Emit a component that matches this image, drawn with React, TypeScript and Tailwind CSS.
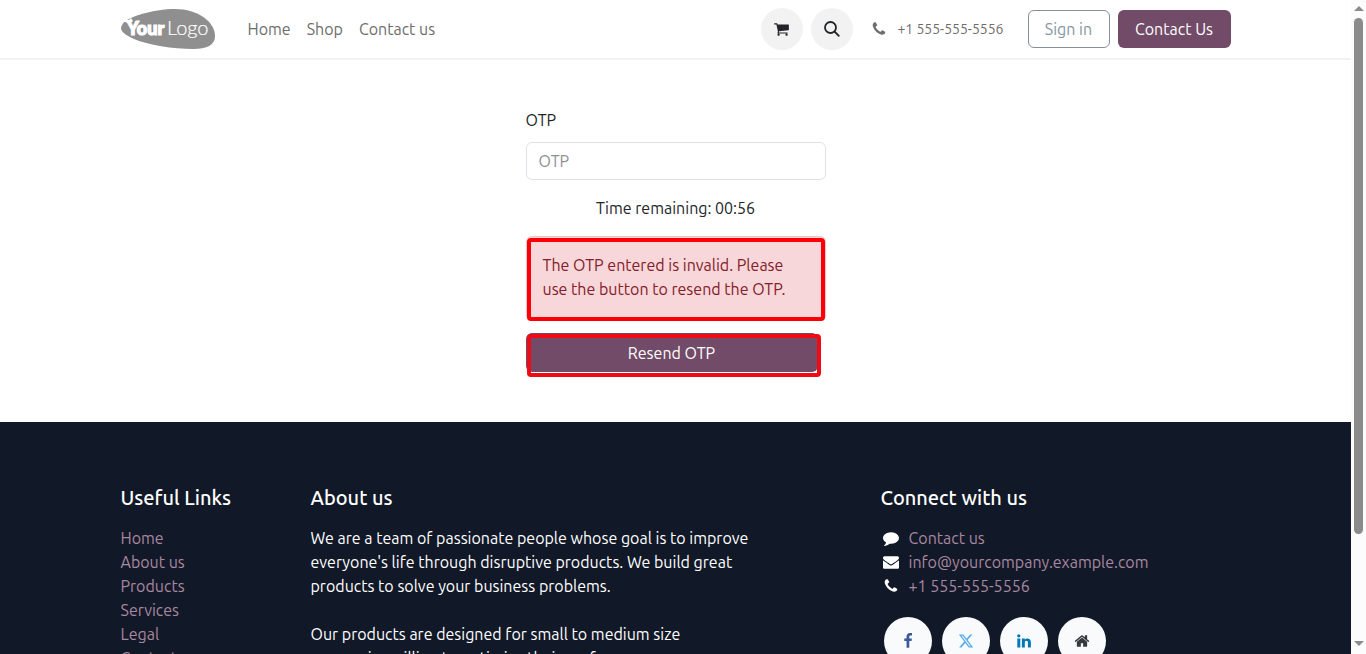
import { FaXTwitter } from "react-icons/fa6";

const paths = {
  cart: "M640 1536q0 52-38 90t-90 38-90-38-38-90 38-90 90-38 90 38 38 90zm896 0q0 52-38 90t-90 38-90-38-38-90 38-90 90-38 90 38 38 90zm128-1088v512q0 24-16.5 42.5t-40.5 21.5l-1044 122q13 60 13 70 0 16-24 64h920q26 0 45 19t19 45-19 45-45 19h-1024q-26 0-45-19t-19-45q0-11 8-31.5t16-36 21.5-40 15.5-29.5l-177-823h-204q-26 0-45-19t-19-45 19-45 45-19h256q16 0 28.5 6.5t19.5 15.5 13 24.5 8 26 5.5 29.5 4.5 26h1201q26 0 45 19t19 45z",
  phone: "M1600 1240q0 27-10 70.5t-21 68.5q-21 50-122 106-94 51-186 51-27 0-53-3.5t-57.5-12.5-47-14.5-55.5-20.5-49-18q-98-35-175-83-127-79-264-216t-216-264q-48-77-83-175-3-9-18-49t-20.5-55.5-14.5-47-12.5-57.5-3.5-53q0-92 51-186 56-101 106-122 25-11 68.5-21t70.5-10q14 0 21 3 18 6 53 76 11 19 30 54t35 63.5 31 53.5q3 4 17.5 25t21.5 35.5 7 28.5q0 20-28.5 50t-62 55-62 53-28.5 46q0 9 5 22.5t8.5 20.5 14 24 11.5 19q76 137 174 235t235 174q2 1 19 11.5t24 14 20.5 8.5 22.5 5q18 0 46-28.5t53-62 55-62 50-28.5q14 0 28.5 7t35.5 21.5 25 17.5q25 15 53.5 31t63.5 35 54 30q70 35 76 53 3 7 3 21z",
  comment: "M1792 896q0 174-120 321.5t-326 233-450 85.5q-70 0-145-8-198 175-460 242-49 14-114 22-17 2-30.5-9t-17.5-29v-1q-3-4-.5-12t2-10 4.5-9.5l6-9 7-8.5 8-9q7-8 31-34.5t34.5-38 31-39.5 32.5-51 27-59 26-76q-157-89-247.5-220t-90.5-281q0-130 71-248.5t191-204.5 286-136.5 348-50.5q244 0 450 85.5t326 233 120 321.5z",
  envelope: "M1792 710v794q0 66-47 113t-113 47h-1472q-66 0-113-47t-47-113v-794q44 49 101 87 362 246 497 345 57 42 92.5 65.5t94.5 48 110 24.5h2q51 0 110-24.5t94.5-48 92.5-65.5q170-123 498-345 57-39 100-87zm0-294q0 79-49 151t-122 123q-376 261-468 325-10 7-42.5 31t-54 38.5-52 32.5-57.5 27-50 9h-2q-23 0-50-9t-57.5-27-52-32.5-54-38.5-42.5-31q-91-64-262-182.5t-205-142.5q-62-42-117-115.5t-55-136.5q0-78 41.5-130t118.5-52h1472q65 0 112.5 47t47.5 113z",
  facebook: "M1343 12v264h-157q-86 0-116 36t-30 108v189h293l-39 296h-254v759h-306v-759h-255v-296h255v-218q0-186 104-288.5t277-102.5q147 0 228 12z",
  linkedin: "M477 625v991h-330v-991h330zm21-306q1 73-50.5 122t-135.5 49h-2q-82 0-132-49t-50-122q0-74 51.5-122.5t134.5-48.5 133 48.5 51 122.5zm1166 729v568h-329v-530q0-105-40.5-164.5t-126.5-59.5q-63 0-105.5 34.5t-63.5 85.5q-11 30-11 81v553h-329q2-399 2-647t-1-296l-1-48h329v144h-2q20-32 41-56t56.5-52 87-43.5 114.5-15.5q171 0 278 113.5t107 332.5z",
  home: "M1472 992v480q0 26-19 45t-45 19h-384v-384h-256v384h-384q-26 0-45-19t-19-45v-480q0-1 .5-3t.5-3l575-474 575 474q1 2 1 6zm223-69l-62 74q-8 9-21 11h-3q-13 0-21-7l-692-577-692 577q-12 8-24 7-13-2-21-11l-62-74q-8-10-7-23.5t11-21.5l719-599q32-26 76-26t76 26l244 204v-195q0-14 9-23t23-9h192q14 0 23 9t9 23v408l219 182q10 8 11 21.5t-7 23.5z",
};

function Icon({ name, className }: { name: keyof typeof paths; className: string }) {
  return (
    <svg viewBox="0 0 1792 1792" fill="currentColor" aria-hidden="true" className={className}>
      <path d={paths[name]} />
    </svg>
  );
}

function Logo() {
  return (
    <svg viewBox="0 0 95 40" className="h-10 w-[95px]" role="img" aria-label="Your Logo">
      <path
        d="M0 19C1 13 7 9.500 16 6.500C31 1.500 44 0 54 0C77 0 94 13 94 27C94 36 86 40 72 40C52 40 27 36 13 30C4 26 0 22.500 0 19Z"
        fill="#8f8f8f"
      />
      <path d="M2 12L5 10L8 11L10 9L12 12L9 15Z" fill="#fff" />
      <text x="6" y="26" fill="#fff" stroke="#fff" strokeWidth="1.2" fontFamily="Lato, sans-serif" fontWeight="900" fontSize="18">
        Your
      </text>
      <text x="46" y="26" fill="#fff" stroke="#fff" strokeWidth="0.2" fontFamily="Lato, sans-serif" fontWeight="300" fontSize="20">
        Logo
      </text>
    </svg>
  );
}

function Header() {
  return (
    <header className="border-b-2 border-[#f3f3f3] bg-white">
      <div className="mx-auto flex h-[58px] max-w-[1110px] items-center">
        <a href="#home" className="mr-6">
          <Logo />
        </a>
        <nav className="flex text-[#6d6d6d]">
          <a href="#home" className="px-2">Home</a>
          <a href="#shop" className="px-2">Shop</a>
          <a href="#contact" className="px-2">Contact us</a>
        </nav>
        <div className="ml-auto flex items-center">
          <a href="#cart" aria-label="Cart" className="mr-2 flex size-[42px] items-center justify-center rounded-full bg-[#f2f2f2] text-[#212529]">
            <Icon name="cart" className="size-4" />
          </a>
          <button type="button" aria-label="Search" className="mr-[18px] flex size-[42px] items-center justify-center rounded-full bg-[#f2f2f2] text-[#212529]">
            <svg viewBox="0 0 16 16" className="size-4" fill="none" stroke="currentColor" strokeWidth="1.8" aria-hidden="true">
              <circle cx="6.500" cy="6.500" r="5.500" />
              <path d="M10.500 10.500L15.300 15.300" />
            </svg>
          </button>
          <a href="tel:+15555555556" className="mr-6 flex items-center gap-2.5 text-sm text-[#6d6d6d]">
            <Icon name="phone" className="size-4" />
            +1 555-555-5556
          </a>
          <a href="#login" className="mr-2 flex h-[38px] w-[82px] items-center justify-center rounded-md border border-[#8a8f94] text-[#8595a2]">
            Sign in
          </a>
          <a href="#contact" className="flex h-[38px] w-[113px] items-center justify-center rounded-md bg-[#714b67] text-white">
            Contact Us
          </a>
        </div>
      </div>
    </header>
  );
}

function OtpForm() {
  return (
    <main className="bg-white pt-12 pb-[45px]">
      <form className="mx-auto flex w-[300px] flex-col text-[#212529]">
        <label htmlFor="otp" className="mb-2.5">OTP</label>
        <input
          id="otp"
          type="text"
          placeholder="OTP"
          className="mb-4 h-[38px] rounded-md border border-[#dee2e6] px-3 outline-none placeholder:text-[#8f8f8f]"
        />
        <p className="mb-4 text-center">Time remaining: 00:56</p>
        <div className="relative mb-3 h-[85px] rounded-md border border-[#f1c5c9] bg-[#f8d7da] p-4 text-[#842029]" role="alert">
          The OTP entered is invalid. Please use the button to resend the OTP.
          <span className="pointer-events-none absolute inset-x-0 top-px -bottom-px rounded-sm border-4 border-[#fb0007]" />
        </div>
        <div className="relative h-11 w-[295px]">
          <button type="button" className="h-[39px] w-[292px] rounded-md bg-[#714b67] text-white">
            Resend OTP
          </button>
          <span className="pointer-events-none absolute top-px right-0 bottom-0 left-px rounded-sm border-4 border-[#f00a14]" />
        </div>
      </form>
    </main>
  );
}

const links = ["Home", "About us", "Products", "Services", "Legal", "Contact us"];

function Footer() {
  return (
    <footer className="grow bg-[#111827] pt-16 text-white">
      <div className="mx-auto grid max-w-[1110px] grid-cols-[190px_445px_1fr_350px]">
        <section>
          <h5 className="mb-4 text-xl leading-6 font-medium">Useful Links</h5>
          <ul className="text-[#a887a0]">
            {links.map((label) => (
              <li key={label}>
                <a href="#link">{label}</a>
              </li>
            ))}
          </ul>
        </section>
        <section>
          <h5 className="mb-4 text-xl leading-6 font-medium">About us</h5>
          <p className="mb-6">
            We are a team of passionate people whose goal is to improve
            everyone's life through disruptive products. We build great
            products to solve your business problems.
          </p>
          <p>
            Our products are designed for small to medium size
            <br />
            companies willing to optimize their performance.
          </p>
        </section>
        <section className="col-start-4">
          <h5 className="mb-4 text-xl leading-6 font-medium">Connect with us</h5>
          <ul className="text-[#a887a0]">
            <li className="flex items-center gap-2.5">
              <Icon name="comment" className="ml-0.5 size-4 text-white" />
              <a href="#contact">Contact us</a>
            </li>
            <li className="flex items-center gap-2.5">
              <Icon name="envelope" className="ml-0.5 size-4 text-white" />
              <a href="mailto:info@yourcompany.example.com">info@yourcompany.example.com</a>
            </li>
            <li className="flex items-center gap-2.5">
              <Icon name="phone" className="ml-0.5 size-4 text-white" />
              <a href="tel:+15555555556">+1 555-555-5556</a>
            </li>
          </ul>
          <div className="mt-[19px] ml-[3px] flex gap-2.5">
            <a href="#facebook" aria-label="Facebook" className="flex size-12 items-center justify-center rounded-full bg-[#f9fafb] text-[#3b5998]">
              <Icon name="facebook" className="size-4" />
            </a>
            <a href="#x" aria-label="X" className="flex size-12 items-center justify-center rounded-full bg-[#f9fafb] text-[#55acee]">
              <FaXTwitter className="size-4" />
            </a>
            <a href="#linkedin" aria-label="LinkedIn" className="flex size-12 items-center justify-center rounded-full bg-[#f9fafb] text-[#0077b5]">
              <Icon name="linkedin" className="size-4" />
            </a>
            <a href="#website" aria-label="Website" className="flex size-12 items-center justify-center rounded-full bg-[#f9fafb] text-[#343a40]">
              <Icon name="home" className="size-4" />
            </a>
          </div>
        </section>
      </div>
    </footer>
  );
}

function Scrollbar() {
  return (
    <div className="flex w-[15px] shrink-0 flex-col items-center bg-[#fcfcfc] pt-1.5 pb-2" aria-hidden="true">
      <svg viewBox="0 0 10 5" className="h-[5px] w-2.5" fill="#8b8b8b">
        <path d="M5 0L10 5H0Z" />
      </svg>
      <div className="mt-[7px] h-[516px] w-[9px] rounded-full bg-[#8b8b8b]" />
      <svg viewBox="0 0 10 5" className="mt-auto h-[5px] w-2.5" fill="#8b8b8b">
        <path d="M5 5L10 0H0Z" />
      </svg>
    </div>
  );
}

export default function App() {
  return (
    <div className="flex h-screen overflow-hidden font-[Ubuntu,'Noto_Sans',sans-serif] text-base leading-6">
      <div className="flex min-w-0 grow flex-col overflow-hidden">
        <Header />
        <OtpForm />
        <Footer />
      </div>
      <Scrollbar />
    </div>
  );
}
